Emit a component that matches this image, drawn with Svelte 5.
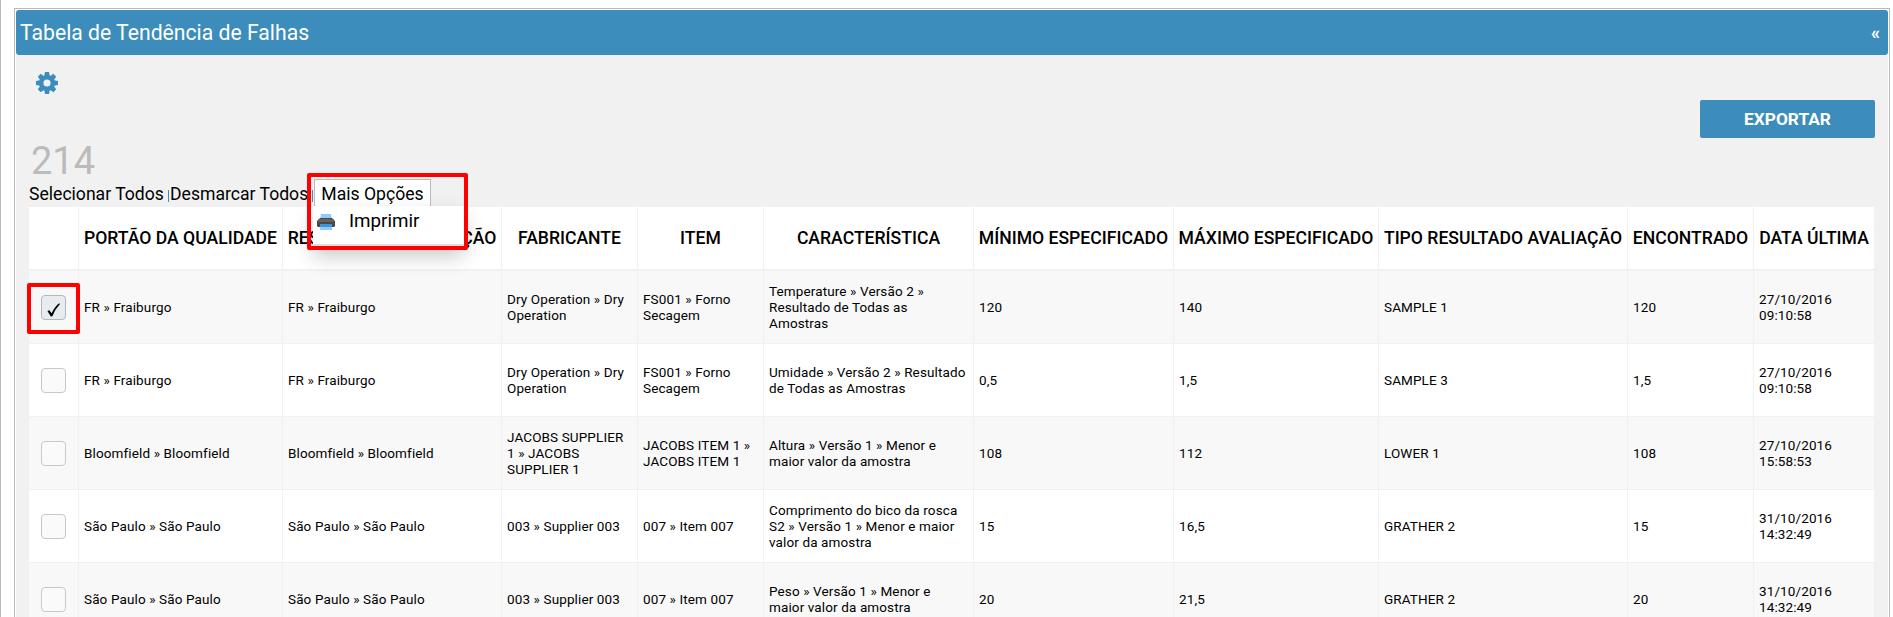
<script lang="ts">
  type Row = { checked: boolean; cells: string[] }

  const columns = [
    'PORTÃO DA QUALIDADE',
    'RESPONSÁVEL INSPEÇÃO',
    'FABRICANTE',
    'ITEM',
    'CARACTERÍSTICA',
    'MÍNIMO ESPECIFICADO',
    'MÁXIMO ESPECIFICADO',
    'TIPO RESULTADO AVALIAÇÃO',
    'ENCONTRADO',
    'DATA ÚLTIMA',
  ]
  const widths = [50, 204, 219, 136, 126, 210, 200, 205, 249, 126, 120]

  let rows = $state<Row[]>([
    { checked: true, cells: ['FR » Fraiburgo', 'FR » Fraiburgo', 'Dry Operation » Dry Operation', 'FS001 » Forno Secagem', 'Temperature » Versão 2 » Resultado de Todas as Amostras', '120', '140', 'SAMPLE 1', '120', '27/10/2016 09:10:58'] },
    { checked: false, cells: ['FR » Fraiburgo', 'FR » Fraiburgo', 'Dry Operation » Dry Operation', 'FS001 » Forno Secagem', 'Umidade » Versão 2 » Resultado de Todas as Amostras', '0,5', '1,5', 'SAMPLE 3', '1,5', '27/10/2016 09:10:58'] },
    { checked: false, cells: ['Bloomfield » Bloomfield', 'Bloomfield » Bloomfield', 'JACOBS SUPPLIER 1 » JACOBS SUPPLIER 1', 'JACOBS ITEM 1 » JACOBS ITEM 1', 'Altura » Versão 1 » Menor e maior valor da amostra', '108', '112', 'LOWER 1', '108', '27/10/2016 15:58:53'] },
    { checked: false, cells: ['São Paulo » São Paulo', 'São Paulo » São Paulo', '003 » Supplier 003', '007 » Item 007', 'Comprimento do bico da rosca S2 » Versão 1 » Menor e maior valor da amostra', '15', '16,5', 'GRATHER 2', '15', '31/10/2016 14:32:49'] },
    { checked: false, cells: ['São Paulo » São Paulo', 'São Paulo » São Paulo', '003 » Supplier 003', '007 » Item 007', 'Peso » Versão 1 » Menor e maior valor da amostra', '20', '21,5', 'GRATHER 2', '20', '31/10/2016 14:32:49'] },
  ])

  function setAll(checked: boolean) {
    for (const row of rows) row.checked = checked
  }
</script>

<div class="page">
  <section class="panel">
    <header class="panel-header">
      <h1>Tabela de Tendência de Falhas</h1>
      <span class="collapse">«</span>
    </header>

    <div class="panel-body">
      <div class="tools">
        <svg class="gear" viewBox="0 0 22 22">
          <g fill="#3c8dbc">
            {#each [0, 45, 90, 135] as angle}
              <path d="M9 0h4l.7 4v14l-.7 4H9l-.7-4V4z" transform="rotate({angle} 11 11)" />
            {/each}
            <circle cx="11" cy="11" r="8" />
          </g>
          <circle cx="11" cy="11" r="3.6" fill="#f1f1f1" />
        </svg>
        <button class="export">EXPORTAR</button>
      </div>
      <div class="count">214</div>

      <div class="links">
        <button class="link select-all" onclick={() => setAll(true)}>Selecionar Todos</button>
        <span class="sep"></span>
        <button class="link clear-all" onclick={() => setAll(false)}>Desmarcar Todos</button>
        <span class="sep"></span>
        <div class="more">
          <button class="more-label">Mais Opções</button>
          <div class="menu">
            <svg class="printer" viewBox="0 0 18 18">
              <path d="M4 1h10l1 6H3z" fill="#90caf9" />
              <path d="M3 5h12l3 3v5l-1 1H1l-1-1V8z" fill="#484848" />
              <path d="M2 6h14l1.5 3H.5z" fill="#616161" />
              <path d="M3.5 11h11l.8 5q0 1-1 1H3.7q-1 0-1-1z" fill="#90caf9" />
              <path d="M3.5 11h11l.5 3H3z" fill="#3f93dd" />
            </svg>
            <span>Imprimir</span>
          </div>
          <div class="mark"></div>
        </div>
      </div>

      <table>
        <colgroup>
          {#each widths as width}
            <col style="width: {width}px" />
          {/each}
        </colgroup>
        <thead>
          <tr>
            <th></th>
            {#each columns as column}
              <th>{column}</th>
            {/each}
          </tr>
        </thead>
        <tbody>
          {#each rows as row, i}
            <tr>
              <td class="select">
                <button class="check" class:checked={row.checked} aria-label="Selecionar" onclick={() => (row.checked = !row.checked)}>
                  {#if row.checked}
                    <svg viewBox="0 0 14 14"><path d="M.4 7.9L2.4 7.2L4.6 10.2Q7.8 3.6 12.2.3L13 1Q8.2 6 5.4 13.2L3.8 13.4z" /></svg>
                  {/if}
                </button>
                {#if i === 0}<div class="mark"></div>{/if}
              </td>
              {#each row.cells as cell}
                <td>{cell}</td>
              {/each}
            </tr>
          {/each}
        </tbody>
      </table>
    </div>
  </section>
</div>

<style>
  :global(body) {
    background: #fff;
    overflow: hidden;
  }
  .page {
    box-sizing: border-box;
    height: 617px;
    padding: 8px 3px 0 13px;
    border-left: 1px solid #bbb;
    overflow: hidden;
    font-family: Roboto, sans-serif;
    color: #000;
  }
  button {
    font: inherit;
    color: inherit;
    padding: 0;
    border: 0;
    background: none;
    cursor: pointer;
  }
  .panel {
    box-sizing: border-box;
    height: 640px;
    padding: 1px;
    border: 1px solid #bbb;
  }
  .panel-header {
    display: flex;
    align-items: center;
    justify-content: space-between;
    box-sizing: border-box;
    height: 45px;
    padding: 0 8px 0 4px;
    border-radius: 3px;
    background: #3c8dbc;
    color: #fff;
  }
  h1 {
    margin: 0;
    font-size: 21.2px;
    font-weight: 400;
  }
  .collapse {
    font-size: 18px;
    font-weight: 700;
  }
  .panel-body {
    height: 600px;
    padding: 0 13px;
    background: #f1f1f1;
  }
  .tools {
    display: flex;
    justify-content: space-between;
    height: 85px;
  }
  .gear {
    width: 22px;
    height: 22px;
    margin: 17px 0 0 7px;
  }
  .export {
    width: 175px;
    height: 38px;
    margin-top: 45px;
    padding-bottom: 1px;
    border-radius: 2px;
    background: #3c8dbc;
    color: #fff;
    font-size: 17.3px;
    font-weight: 700;
  }
  .count {
    height: 42px;
    padding-left: 2px;
    color: #bbb;
    font-size: 38px;
    line-height: 42px;
  }
  .links {
    display: flex;
    align-items: flex-start;
    height: 25px;
    font-size: 17.6px;
    line-height: 22px;
  }
  .link {
    padding-top: 1px;
    text-align: left;
    white-space: nowrap;
  }
  .select-all {
    width: 139px;
  }
  .clear-all {
    width: 142px;
    margin-left: 1px;
  }
  .sep {
    width: 1px;
    height: 12px;
    margin-top: 8px;
    background: #3c8dbc;
  }
  .more {
    position: relative;
    margin-left: 1px;
  }
  .more-label {
    display: block;
    box-sizing: border-box;
    width: 117px;
    height: 28px;
    margin-top: -3px;
    border: 1px solid #bbb;
    border-bottom: 0;
    background: #fff;
  }
  .menu {
    position: absolute;
    top: 24px;
    left: -1px;
    display: flex;
    gap: 14px;
    box-sizing: border-box;
    width: 151px;
    height: 40px;
    padding: 4px 0 0 4px;
    border-bottom: 2px solid #dedede;
    background: #fff;
    box-shadow: 0 10px 20px rgba(0, 0, 0, 0.22);
    font-size: 18.8px;
    line-height: 23px;
  }
  .printer {
    width: 18px;
    height: 18px;
    margin-top: 3px;
  }
  .mark {
    position: absolute;
    box-sizing: border-box;
    border: 4px solid #f00;
    border-radius: 2px;
    pointer-events: none;
  }
  .more .mark {
    top: -9px;
    left: -7px;
    width: 161px;
    height: 77px;
  }
  table {
    width: 1845px;
    table-layout: fixed;
    border-collapse: separate;
    border-spacing: 0;
    background: #fff;
  }
  th,
  td {
    box-sizing: border-box;
    border-right: 1px solid #f1f1f1;
  }
  th:last-child,
  td:last-child {
    border-right: 0;
  }
  th {
    height: 64px;
    padding: 0;
    border-bottom: 2px solid #f1f1f1;
    font-size: 17.6px;
    font-weight: 500;
    white-space: nowrap;
  }
  td {
    height: 73px;
    padding: 0 5px;
    border-bottom: 1px solid #f1f1f1;
    font-size: 13.5px;
    letter-spacing: 0.12px;
    line-height: 16px;
    vertical-align: middle;
  }
  tbody tr:nth-child(odd) td {
    background: #f8f8f8;
  }
  .select {
    position: relative;
    padding: 0 0 0 12px;
  }
  .check {
    display: block;
    box-sizing: border-box;
    width: 25px;
    height: 25px;
    border: 1px solid #c8c8c8;
    border-radius: 4px;
    background: #fafafa;
  }
  .check.checked {
    border-color: #adb8c0;
    background: #e9ecef;
  }
  .check svg {
    display: block;
    width: 14px;
    height: 14px;
    margin: 5px 0 0 5px;
  }
  .select .mark {
    top: 12px;
    left: -2px;
    width: 53px;
    height: 51px;
  }
</style>
